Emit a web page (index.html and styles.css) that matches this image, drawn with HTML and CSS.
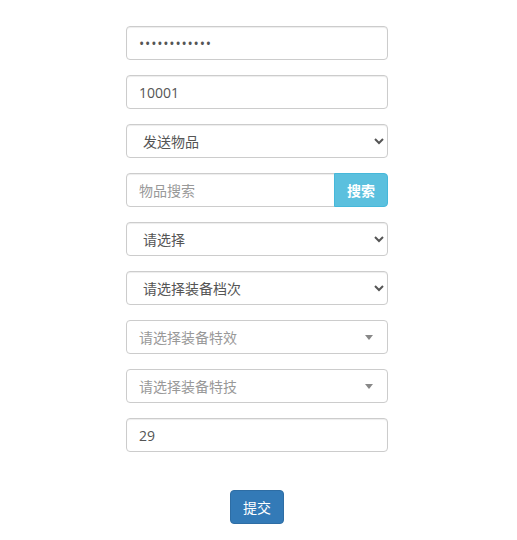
FILE: index.html
```html
<!DOCTYPE html>
<html lang="zh-CN">
<head>
    <meta charset="UTF-8">
    <meta name="viewport" content="width=device-width, initial-scale=1.0">
    <title>发送物品</title>
    <link rel="stylesheet" href="styles.css">
</head>
<body>
    <form class="send-form" onsubmit="return false">
        <div class="form-group">
            <input type="password" class="form-control pwd" value="abcdefghijkl">
        </div>
        <div class="form-group">
            <input type="text" class="form-control" value="10001">
        </div>
        <div class="form-group">
            <select class="form-control">
                <option>发送物品</option>
            </select>
        </div>
        <div class="form-group">
            <div class="input-group">
                <input type="text" class="form-control" placeholder="物品搜索">
                <button type="button" class="btn btn-info">搜索</button>
            </div>
        </div>
        <div class="form-group">
            <select class="form-control">
                <option>请选择</option>
            </select>
        </div>
        <div class="form-group">
            <select class="form-control">
                <option>请选择装备档次</option>
            </select>
        </div>
        <div class="form-group">
            <div class="select2">
                <span class="select2-placeholder">请选择装备特效</span>
                <span class="select2-arrow"></span>
            </div>
        </div>
        <div class="form-group">
            <div class="select2">
                <span class="select2-placeholder">请选择装备特技</span>
                <span class="select2-arrow"></span>
            </div>
        </div>
        <div class="form-group">
            <input type="text" class="form-control" value="29">
        </div>
        <div class="actions">
            <button type="submit" class="btn btn-primary">提交</button>
        </div>
    </form>
</body>
</html>
```

FILE: styles.css
```css
body {
    margin: 0;
    background-color: #fff;
    font-family: "Open Sans", "Noto Sans CJK SC", sans-serif;
    font-size: 14px;
    color: #333;
}
.send-form {
    width: 262px;
    margin: 26px 0 0 126px;
}
.form-group {
    margin-bottom: 15px;
}
.form-control {
    display: block;
    box-sizing: border-box;
    width: 100%;
    height: 34px;
    padding: 6px 12px;
    font-family: inherit;
    font-size: 14px;
    color: #555;
    background-color: #fff;
    border: 1px solid #ccc;
    border-radius: 4px;
    box-shadow: inset 0 1px 1px rgba(0, 0, 0, 0.075);
    outline: none;
}
.form-control::placeholder {
    color: #999;
}
.pwd {
    letter-spacing: 0.8px;
}
select.form-control {
    padding: 6px 8px 6px 12px;
}
.input-group {
    display: flex;
}
.input-group .form-control {
    flex: 1;
    border-radius: 4px 0 0 4px;
}
.btn {
    height: 34px;
    padding: 6px 12px;
    font-family: inherit;
    font-size: 14px;
    color: #fff;
    border: 1px solid transparent;
    border-radius: 4px;
    cursor: pointer;
}
.btn-info {
    background-color: #5bc0de;
    border-color: #46b8da;
    border-radius: 0 4px 4px 0;
    margin-left: -1px;
    width: 54px;
    padding: 6px 0;
    font-weight: 600;
}
.btn-primary {
    background-color: #337ab7;
    border-color: #2e6da4;
    width: 54px;
    padding: 6px 0;
}
.select2 {
    display: flex;
    align-items: center;
    justify-content: space-between;
    box-sizing: border-box;
    height: 34px;
    padding: 0 14px 0 12px;
    border: 1px solid #ccc;
    border-radius: 4px;
    background-color: #fff;
}
.select2-placeholder {
    color: #999;
}
.select2-arrow {
    width: 0;
    height: 0;
    border-style: solid;
    border-width: 5px 4px 0 4px;
    border-color: #888 transparent transparent transparent;
}
.actions {
    margin-top: 38px;
    text-align: center;
}
```
